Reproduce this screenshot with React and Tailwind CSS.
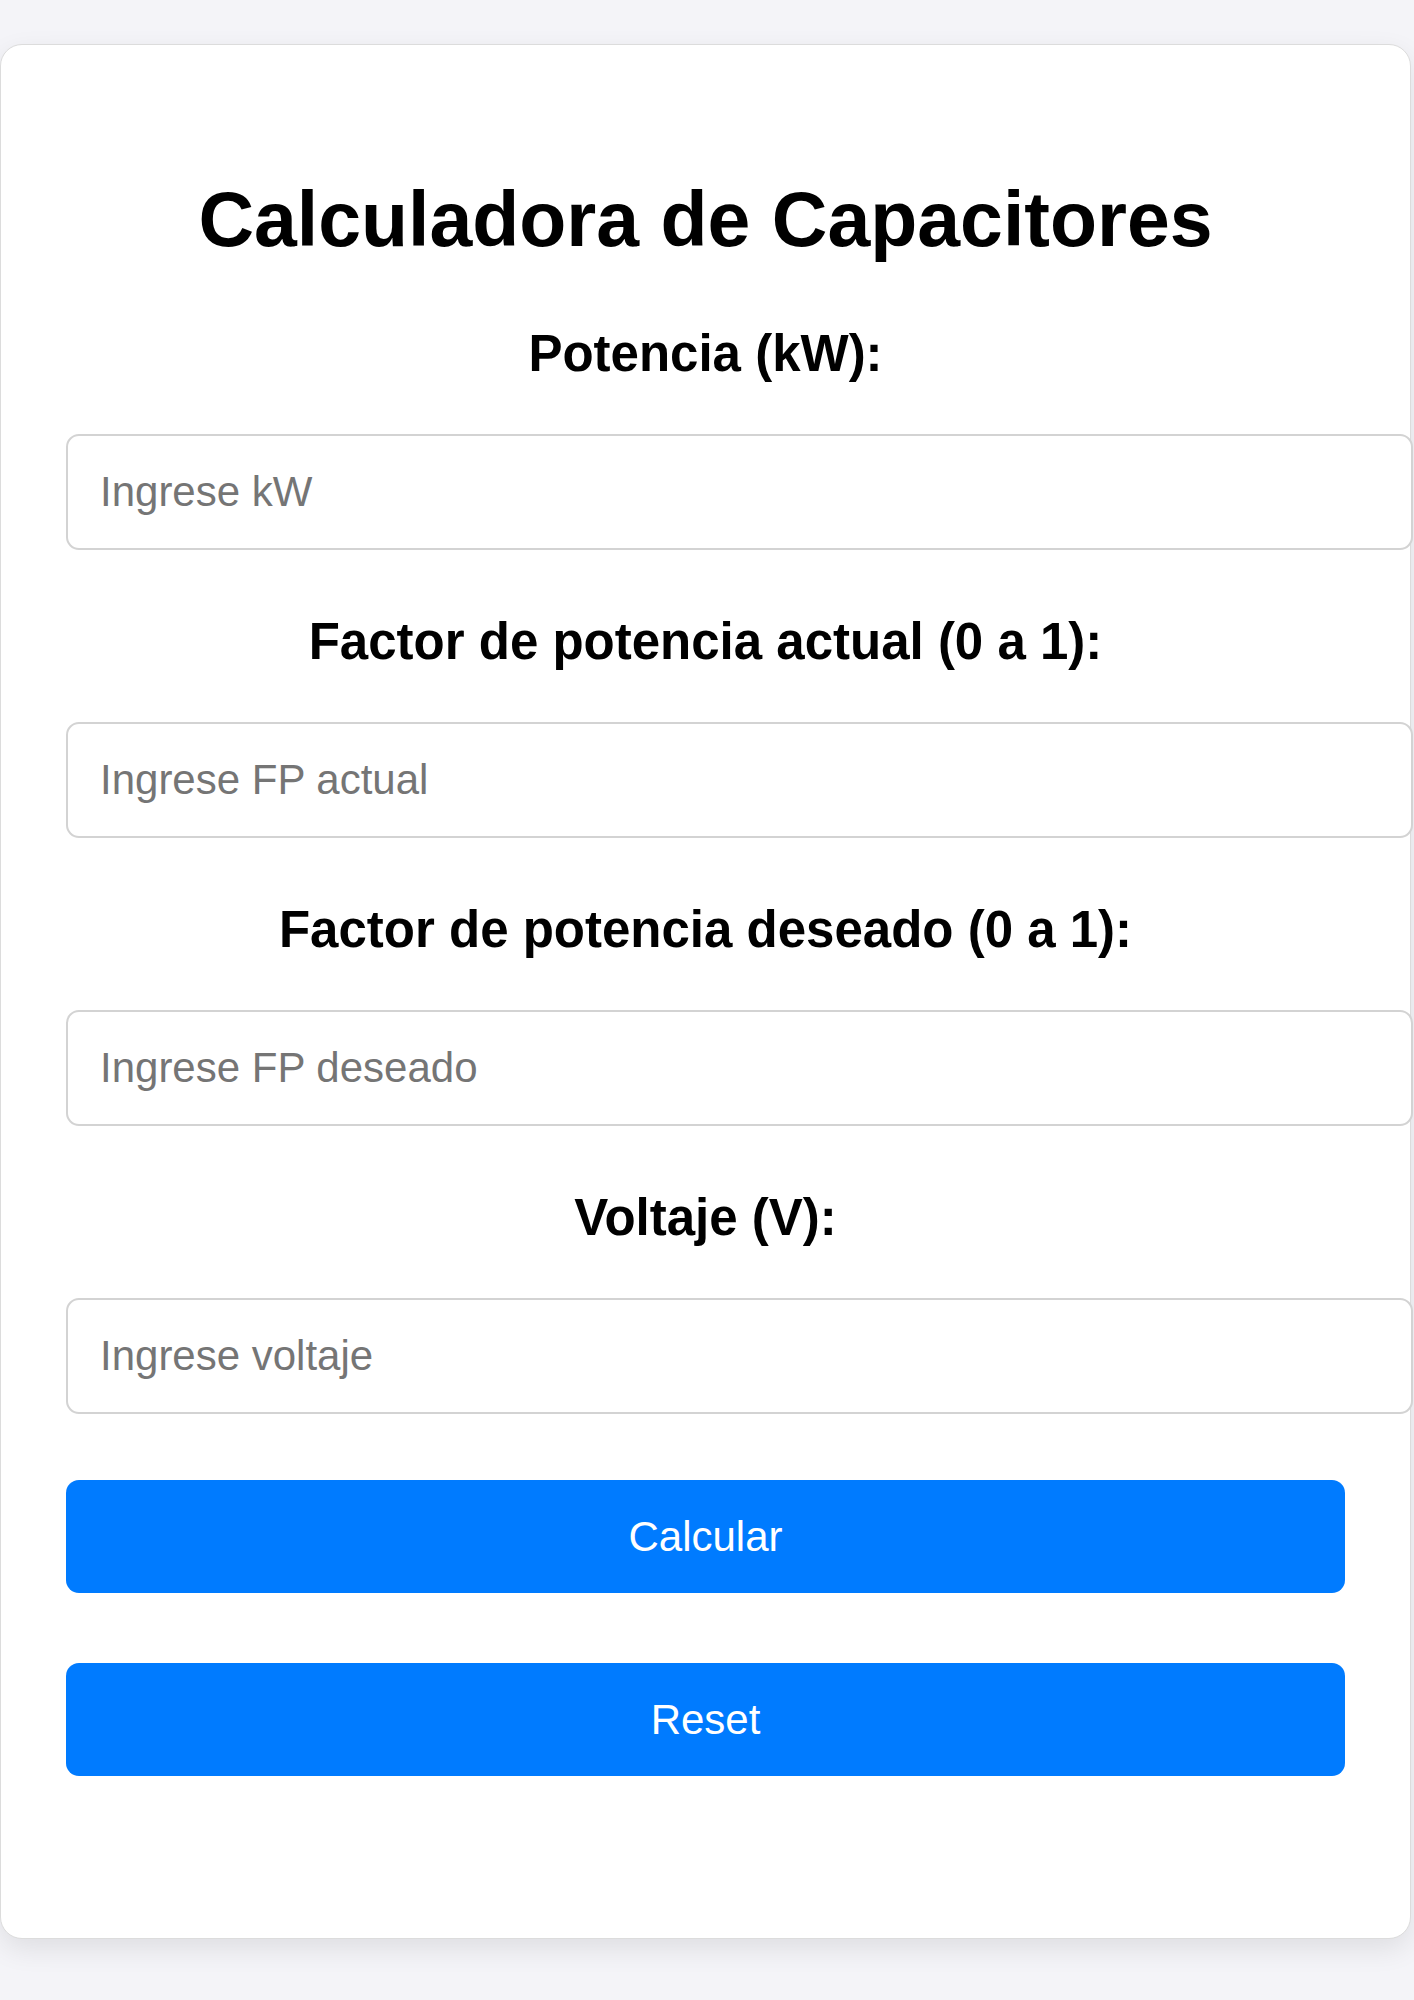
import { useState } from "react";

const Field = ({ label, placeholder, value, onChange, first }) => {
  return (
    <>
      <label
        className={`block text-center font-bold text-[51px] leading-[59px] text-black ${
          first ? "mt-[61px]" : "mt-[62px]"
        }`}
      >
        {label}
      </label>
      <input
        type="number"
        placeholder={placeholder}
        value={value}
        onChange={(e) => onChange(e.target.value)}
        className="mt-[51px] block h-[116px] w-[1347px] max-w-none rounded-[13px] border-2 border-[#d3d3d3] bg-white px-[32px] text-[42px] text-black outline-none placeholder:text-[#757575]"
      />
    </>
  );
};

export default function App() {
  const [kw, setKw] = useState("");
  const [fpActual, setFpActual] = useState("");
  const [fpDeseado, setFpDeseado] = useState("");
  const [voltaje, setVoltaje] = useState("");

  const reset = () => {
    setKw("");
    setFpActual("");
    setFpDeseado("");
    setVoltaje("");
  };

  return (
    <div
      className="min-h-[2000px] bg-[#f4f4f8] pt-[44px]"
      style={{ fontFamily: '"Liberation Sans", Arial, sans-serif' }}
    >
      <div className="flex w-[1411px] flex-col rounded-[22px] border border-[#dcdcdc] bg-white px-[65px] pt-[130px] pb-[162px] shadow-[0_10px_28px_rgba(0,0,0,0.09)]">
        <h2 className="text-center font-bold text-[77px] leading-[88px] text-black">
          Calculadora de Capacitores
        </h2>
        <Field
          first
          label="Potencia (kW):"
          placeholder="Ingrese kW"
          value={kw}
          onChange={setKw}
        />
        <Field
          label="Factor de potencia actual (0 a 1):"
          placeholder="Ingrese FP actual"
          value={fpActual}
          onChange={setFpActual}
        />
        <Field
          label="Factor de potencia deseado (0 a 1):"
          placeholder="Ingrese FP deseado"
          value={fpDeseado}
          onChange={setFpDeseado}
        />
        <Field
          label="Voltaje (V):"
          placeholder="Ingrese voltaje"
          value={voltaje}
          onChange={setVoltaje}
        />
        <button className="mt-[66px] h-[113px] w-full rounded-[13px] bg-[#007bff] text-[42px] text-white">
          Calcular
        </button>
        <button
          onClick={reset}
          className="mt-[70px] h-[113px] w-full rounded-[13px] bg-[#007bff] text-[42px] text-white"
        >
          Reset
        </button>
      </div>
    </div>
  );
}
